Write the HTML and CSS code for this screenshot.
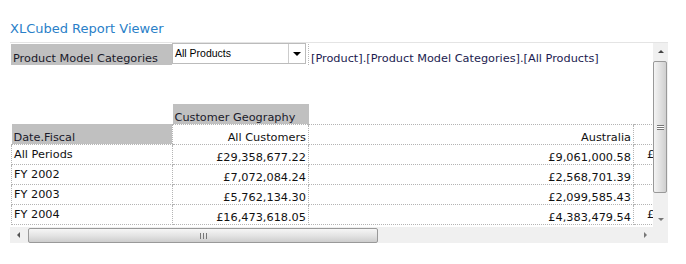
FILE: index.html
```html
<!DOCTYPE html>
<html lang="en">
<head>
  <meta charset="UTF-8" />
  <title>XLCubed Report Viewer</title>
  <link rel="stylesheet" href="styles.css">
</head>
<body>
  <div class="titulo">XLCubed Report Viewer</div>

  <div class="painel">
    <div class="conteudo">
      <!-- Filtro -->
      <div class="filtro">
        <div class="filtro-rotulo">Product Model Categories</div>
        <div class="combo">
          <span class="combo-texto">All Products</span>
          <span class="combo-botao"><span class="seta-baixo"></span></span>
        </div>
        <div class="filtro-membro">[Product].[Product Model Categories].[All Products]</div>
      </div>

      <table class="grade">
        <colgroup>
          <col style="width:161px"><col style="width:136px"><col style="width:325px"><col style="width:40px">
        </colgroup>
        <tr>
          <td class="vazio"></td>
          <td class="cab">Customer Geography</td>
          <td class="vazio"></td>
          <td class="vazio"></td>
        </tr>
        <tr>
          <td class="cab cab-linha">Date.Fiscal</td>
          <td class="num">All Customers</td>
          <td class="num">Australia</td>
          <td></td>
        </tr>
        <tr>
          <td>All Periods</td>
          <td class="num">£29,358,677.22</td>
          <td class="num">£9,061,000.58</td>
          <td class="corte">£</td>
        </tr>
        <tr>
          <td>FY 2002</td>
          <td class="num">£7,072,084.24</td>
          <td class="num">£2,568,701.39</td>
          <td class="corte"></td>
        </tr>
        <tr>
          <td>FY 2003</td>
          <td class="num">£5,762,134.30</td>
          <td class="num">£2,099,585.43</td>
          <td class="corte"></td>
        </tr>
        <tr>
          <td>FY 2004</td>
          <td class="num">£16,473,618.05</td>
          <td class="num">£4,383,479.54</td>
          <td class="corte">£</td>
        </tr>
      </table>
    </div>

    <!-- Barra vertical -->
    <div class="barra-v">
      <div class="btn-v"><span class="seta-cima"></span></div>
      <div class="trilho-v">
        <div class="polegar-v"><span class="grip-v"></span></div>
      </div>
      <div class="btn-v"><span class="seta-baixo cinza"></span></div>
    </div>

    <!-- Barra horizontal -->
    <div class="barra-h">
      <div class="btn-h"><span class="seta-esq"></span></div>
      <div class="trilho-h">
        <div class="polegar-h"><span class="grip-h"></span></div>
      </div>
      <div class="btn-h"><span class="seta-dir"></span></div>
    </div>
    <div class="canto"></div>
  </div>
</body>
</html>
```

FILE: styles.css
```css
body {
  margin: 0;
  padding: 21px 0 0 10px;
  font-family: "DejaVu Sans", Verdana, sans-serif;
  background-color: #fff;
}
.titulo {
  font-size: 13px;
  color: #2a80c8;
  height: 21px;
  line-height: 16px;
}

.painel {
  width: 658px;
  display: grid;
  grid-template-columns: 643px 15px;
  grid-template-rows: 184px 16px;
  border-top: 1px solid #e4e4e4;
}
.conteudo {
  overflow: hidden;
  padding-left: 1px;
}

/* Filtro */
.filtro {
  display: flex;
  align-items: stretch;
  height: 21px;
  margin-top: 1px;
}
.filtro-rotulo {
  width: 161px;
  background-color: #c0c0c0;
  font-size: 11.3px;
  color: #1a1a2a;
  padding: 8px 0 0 2px;
  box-sizing: border-box;
  line-height: 13px;
}
.combo {
  display: flex;
  width: 134px;
  height: 21px;
  margin-top: -1px;
  border: 1px solid #bbb;
  box-sizing: border-box;
  background: #fff;
}
.combo-texto {
  flex: 1;
  font-family: "Liberation Sans", Arial, sans-serif;
  font-size: 10.5px;
  padding: 3px 0 0 2px;
  color: #000;
}
.combo-botao {
  width: 16px;
  border-left: 1px solid #ccc;
  display: flex;
  align-items: center;
  justify-content: center;
}
.filtro-membro {
  border-left: 1px dotted #b8b8b8;
  margin-left: 2px;
  padding: 8px 0 0 2px;
  font-size: 11.3px;
  line-height: 14px;
  color: #1c1c50;
}

/* Grade */
.grade {
  border-collapse: collapse;
  table-layout: fixed;
  width: 662px;
  margin-top: 39px;
  font-size: 11.3px;
  color: #111;
}
.grade td {
  height: 20px;
  padding: 0 2px;
  border: 1px dotted #b4b4b4;
  white-space: nowrap;
  overflow: hidden;
  vertical-align: bottom;
  line-height: 12px;
  box-sizing: border-box;
}
.grade td.vazio {
  border-top: none;
  border-left: none;
  border-right: none;
}
.grade tr:first-child td.vazio:first-child {
  border-bottom: none;
}
.grade td.cab {
  background-color: #c0c0c0;
  border: none;
  color: #1a1a2a;
}
.grade td.cab-linha {
  border-bottom: 1px dotted #b4b4b4;
}
.grade tr:nth-child(n+3) td {
  vertical-align: top;
  padding-top: 4px;
}
.grade tr:nth-child(n+3) td.num {
  vertical-align: bottom;
  padding: 0 2px 0;
}
.grade td.corte {
  padding-left: 13px;
  vertical-align: bottom;
  padding-top: 0;
}
.num {
  text-align: right;
}

/* Setas */
.seta-baixo, .seta-cima, .seta-esq, .seta-dir {
  width: 0;
  height: 0;
  display: inline-block;
}
.seta-baixo {
  border-left: 4px solid transparent;
  border-right: 4px solid transparent;
  border-top: 4px solid #000;
}
.seta-baixo.cinza {
  border-left-width: 3px;
  border-right-width: 3px;
  border-top: 3px solid #777;
}
.seta-cima {
  border-left: 3px solid transparent;
  border-right: 3px solid transparent;
  border-bottom: 3px solid #444;
}
.seta-esq {
  border-top: 3px solid transparent;
  border-bottom: 3px solid transparent;
  border-right: 3px solid #555;
}
.seta-dir {
  border-top: 3px solid transparent;
  border-bottom: 3px solid transparent;
  border-left: 3px solid #777;
}

/* Barra vertical */
.barra-v {
  background-color: #f0f0f0;
  display: flex;
  flex-direction: column;
}
.btn-v {
  height: 16px;
  display: flex;
  align-items: center;
  justify-content: center;
}
.trilho-v {
  flex: 1;
  padding: 1px 0;
}
.polegar-v {
  height: 130px;
  margin: 1px 1px 0 0;
  border: 1px solid #999;
  border-radius: 2px;
  background: linear-gradient(to right, #f4f4f4, #dedede 60%, #cfcfcf);
  display: flex;
  align-items: center;
  justify-content: center;
}
.grip-v {
  width: 7px;
  height: 5px;
  background: linear-gradient(#777 0 1px, #fff 1px 2px, #777 2px 3px, #fff 3px 4px, #777 4px);
}

/* Barra horizontal */
.barra-h {
  background-color: #f0f0f0;
  display: flex;
}
.btn-h {
  width: 16px;
  display: flex;
  align-items: center;
  justify-content: center;
}
.trilho-h {
  flex: 1;
  padding: 1px 0;
}
.polegar-h {
  width: 348px;
  height: 13px;
  margin-left: 2px;
  border: 1px solid #999;
  border-radius: 2px;
  background: linear-gradient(#f6f6f6, #e2e2e2 55%, #cdcdcd);
  display: flex;
  align-items: center;
  justify-content: center;
}
.grip-h {
  width: 7px;
  height: 6px;
  background: linear-gradient(to right, #777 0 1px, transparent 1px 3px, #777 3px 4px, transparent 4px 6px, #777 6px 7px);
}
.canto {
  background-color: #f0f0f0;
}
```
